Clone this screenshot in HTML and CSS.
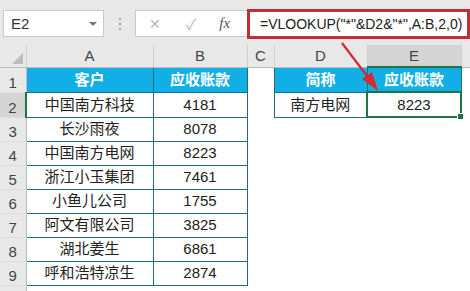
FILE: index.html
```html
<!DOCTYPE html>
<html lang="zh">

<head>
  <meta charset="UTF-8">
  <title>VLOOKUP</title>
  <link rel="stylesheet" href="styles.css">
</head>

<body>
  <div class="toolbar">
    <div class="namebox">
      <span>E2</span>
      <span class="caret"></span>
    </div>
    <div class="grip"><i></i><i></i><i></i></div>
    <div class="fbar">
      <div class="fbtns">
        <span class="btn-x">✕</span>
        <span class="btn-ok">✓</span>
        <span class="btn-fx">fx</span>
      </div>
      <div class="formula">=VLOOKUP("*"&amp;D2&amp;"*",A:B,2,0)</div>
    </div>
  </div>

  <table class="sheet">
    <colgroup>
      <col class="c-rh">
      <col class="c-a">
      <col class="c-b">
      <col class="c-c">
      <col class="c-d">
      <col class="c-e">
      <col>
    </colgroup>
    <tr class="colhead">
      <th class="corner"><span class="tri"></span></th>
      <th>A</th>
      <th>B</th>
      <th>C</th>
      <th>D</th>
      <th class="sel">E</th>
      <th></th>
    </tr>
    <tr>
      <td class="rh">1</td>
      <td class="hd">客户</td>
      <td class="hd">应收账款</td>
      <td></td>
      <td class="hd">简称</td>
      <td class="hd">应收账款</td>
      <td></td>
    </tr>
    <tr>
      <td class="rh sel">2</td>
      <td class="bd">中国南方科技</td>
      <td class="bd">4181</td>
      <td></td>
      <td class="bd">南方电网</td>
      <td class="bd active">8223<span class="handle"></span></td>
      <td></td>
    </tr>
    <tr>
      <td class="rh">3</td>
      <td class="bd">长沙雨夜</td>
      <td class="bd">8078</td>
      <td colspan="4"></td>
    </tr>
    <tr>
      <td class="rh">4</td>
      <td class="bd">中国南方电网</td>
      <td class="bd">8223</td>
      <td colspan="4"></td>
    </tr>
    <tr>
      <td class="rh">5</td>
      <td class="bd">浙江小玉集团</td>
      <td class="bd">7461</td>
      <td colspan="4"></td>
    </tr>
    <tr>
      <td class="rh">6</td>
      <td class="bd">小鱼儿公司</td>
      <td class="bd">1755</td>
      <td colspan="4"></td>
    </tr>
    <tr>
      <td class="rh">7</td>
      <td class="bd">阿文有限公司</td>
      <td class="bd">3825</td>
      <td colspan="4"></td>
    </tr>
    <tr>
      <td class="rh">8</td>
      <td class="bd">湖北姜生</td>
      <td class="bd">6861</td>
      <td colspan="4"></td>
    </tr>
    <tr>
      <td class="rh">9</td>
      <td class="bd">呼和浩特凉生</td>
      <td class="bd">2874</td>
      <td colspan="4"></td>
    </tr>
    <tr class="last">
      <td class="rh"></td>
      <td colspan="6"></td>
    </tr>
  </table>

  <!-- red pointer from the formula to the result cell -->
  <svg class="arrow" width="470" height="291" viewBox="0 0 470 291">
    <line x1="342" y1="43" x2="370" y2="80" stroke="#d42a30" stroke-width="2.2" />
    <polygon points="378,91 362,79 372,72" fill="#d42a30" />
  </svg>
</body>

</html>
```

FILE: styles.css
```css
body {
  margin: 0;
  width: 470px;
  height: 291px;
  overflow: hidden;
  background: #fff;
  font-family: "Liberation Sans", "Noto Sans CJK SC", sans-serif;
  color: #222;
}

.toolbar {
  height: 45px;
  background: #e8e8e8;
  display: flex;
  align-items: flex-start;
  padding: 10px 0 0 3px;
  box-sizing: border-box;
}

.namebox {
  flex-shrink: 0;
  width: 101px;
  height: 27px;
  box-sizing: border-box;
  background: #fff;
  border: 1px solid #c9c9c9;
  display: flex;
  align-items: center;
  justify-content: space-between;
  padding: 0 6px 0 7px;
  font-size: 15px;
  color: #333;
}

.caret {
  width: 0;
  height: 0;
  border-left: 4px solid transparent;
  border-right: 4px solid transparent;
  border-top: 4px solid #777;
}

.grip {
  flex-shrink: 0;
  width: 31px;
  height: 27px;
  display: flex;
  flex-direction: column;
  align-items: center;
  justify-content: center;
  gap: 3px;
}

.grip i {
  width: 2px;
  height: 2px;
  background: #a8a8a8;
}

.fbar {
  flex: 1;
  min-width: 0;
  height: 27px;
  background: #fff;
  border: 1px solid #c9c9c9;
  border-right: none;
  box-sizing: border-box;
  display: flex;
  align-items: flex-start;
}

.fbtns {
  flex-shrink: 0;
  width: 111px;
  height: 25px;
  display: flex;
  align-items: center;
  padding-left: 13px;
  box-sizing: border-box;
}

.btn-x {
  width: 12px;
  font-size: 14px;
  color: #b8b8b8;
}

.btn-ok {
  margin-left: 25px;
  font-size: 15px;
  color: #b8b8b8;
}

.btn-fx {
  margin-left: 23px;
  font-family: "Liberation Serif", serif;
  font-style: italic;
  font-size: 15px;
  color: #555;
}

.formula {
  flex: 1;
  min-width: 0;
  height: 30px;
  margin-top: -2px;
  box-sizing: border-box;
  border: 3px solid #c32d36;
  padding-left: 10px;
  display: flex;
  align-items: center;
  font-size: 14px;
  color: #222;
  white-space: nowrap;
  overflow: hidden;
}

.sheet {
  border-collapse: collapse;
  table-layout: fixed;
  width: 470px;
}

.c-rh { width: 26px; }
.c-a { width: 127px; }
.c-b { width: 94px; }
.c-c { width: 27px; }
.c-d { width: 93px; }
.c-e { width: 94px; }

.sheet tr {
  height: 24px;
}

.sheet td,
.sheet th {
  padding: 0;
  height: 23px;
  line-height: 18px;
  text-align: center;
  font-size: 15px;
  font-weight: normal;
  white-space: nowrap;
  overflow: visible;
}

.colhead {
  height: 22px !important;
}

.colhead th {
  height: 21px;
  background: #e8e8e8;
  color: #444;
  border-left: 1px solid #cfcfcf;
  border-bottom: 1px solid #bdbdbd;
}

.colhead th.corner {
  position: relative;
  border-left: none;
}

.tri {
  position: absolute;
  right: 3px;
  bottom: 3px;
  width: 0;
  height: 0;
  border-left: 11px solid transparent;
  border-bottom: 11px solid #bdbdbd;
}

.colhead th.sel {
  background: #d4d4d4;
  border-bottom: 2px solid #217346;
}

.rh {
  background: #e8e8e8;
  color: #444;
  border-right: 1px solid #bdbdbd;
  border-bottom: 1px solid #dcdcdc;
  vertical-align: bottom;
}

.rh.sel {
  background: #d4d4d4;
  border-right: 2px solid #217346;
}

.hd {
  background: #12aee6;
  color: #fff;
  font-weight: bold !important;
  border: 1px solid #1c6e7c;
}

.bd {
  border: 1px solid #1c6e7c;
}

.bd.active {
  position: relative;
  border: 2px solid #217346;
}

.handle {
  position: absolute;
  right: -4px;
  bottom: -4px;
  width: 5px;
  height: 5px;
  background: #217346;
  border: 1px solid #fff;
}

.last {
  height: 10px !important;
}

.last td {
  height: 10px;
}

.arrow {
  position: absolute;
  top: 0;
  left: 0;
  pointer-events: none;
}
```
